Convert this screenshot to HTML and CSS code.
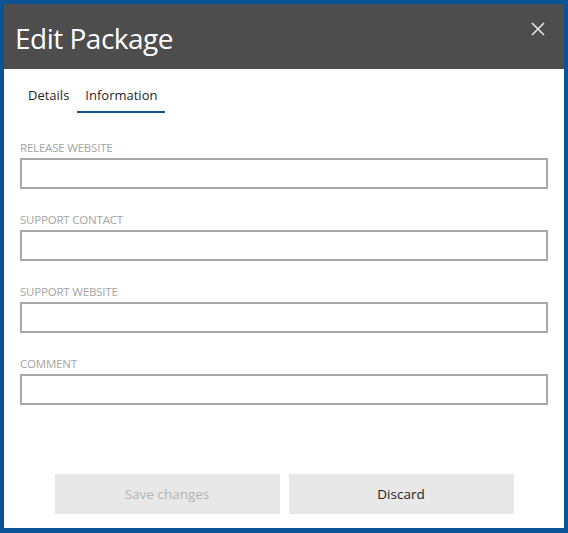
FILE: index.html
```html
<!DOCTYPE html>
<html>
<head>
<meta charset="utf-8">
<link rel="stylesheet" href="styles.css">
</head>
<body>
<div class="frame">
  <header class="header">
    <h1 class="title">Edit Package</h1>
    <button class="close" aria-label="Close">
      <svg width="14" height="14" viewBox="0 0 14 14"><path d="M1 1L13 13M13 1L1 13" stroke="#e6e6e6" stroke-width="1.6" fill="none"/></svg>
    </button>
  </header>
  <nav class="tabs">
    <div class="tab">Details</div>
    <div class="tab active">Information</div>
  </nav>
  <main class="form">
    <div class="field">
      <label class="label">RELEASE WEBSITE</label>
      <input class="input" type="text">
    </div>
    <div class="field">
      <label class="label">SUPPORT CONTACT</label>
      <input class="input" type="text">
    </div>
    <div class="field">
      <label class="label">SUPPORT WEBSITE</label>
      <input class="input" type="text">
    </div>
    <div class="field">
      <label class="label">COMMENT</label>
      <input class="input" type="text">
    </div>
  </main>
  <footer class="actions">
    <button class="btn disabled">Save changes</button>
    <button class="btn">Discard</button>
  </footer>
</div>
</body>
</html>
```
FILE: styles.css
```css
* { box-sizing: border-box; }
html, body { margin: 0; padding: 0; }
body {
  width: 568px;
  height: 533px;
  font-family: "Open Sans", "Noto Sans", sans-serif;
  background: #0b5394;
}
.frame {
  width: 568px;
  height: 533px;
  border-style: solid;
  border-color: #0b5394;
  border-width: 4px 4px 5px 4px;
  background: #fff;
  display: flex;
  flex-direction: column;
}
.header {
  height: 65px;
  background: #4d4d4d;
  display: flex;
  align-items: center;
  justify-content: space-between;
  padding: 0 19px 0 11px;
}
.title {
  margin: 0;
  font-weight: 400;
  font-size: 28px;
  color: #fff;
  letter-spacing: -0.5px;
  padding-top: 2px;
}
.close {
  background: none;
  border: 0;
  padding: 0;
  width: 14px;
  height: 14px;
  display: block;
  margin-top: -16px;
}
.close svg { display: block; }
.tabs {
  display: flex;
  padding-left: 16px;
}
.tab {
  padding: 16px 8px 6px;
  font-size: 13px;
  line-height: 20px;
  color: #1f1f1f;
  border-bottom: 2px solid transparent;
}
.tab.active { border-bottom-color: #0b5394; }
.form {
  padding: 27px 16px 0;
  display: flex;
  flex-direction: column;
  gap: 23px;
}
.field {
  display: flex;
  flex-direction: column;
  gap: 2px;
}
.label {
  font-size: 11.5px;
  line-height: 16px;
  color: #a3a3a3;
  letter-spacing: -0.2px;
}
.input {
  height: 31px;
  width: 100%;
  border: 2px solid #a6a6a6;
  margin: 0;
  background: #fff;
}
.actions {
  margin-top: auto;
  display: flex;
  justify-content: center;
  gap: 9px;
  padding-bottom: 14px;
}
.btn {
  width: 225px;
  height: 40px;
  border: 0;
  background: #e8e8e8;
  font-family: inherit;
  font-size: 13.5px;
  color: #222;
}
.btn.disabled { color: #b3b3b3; }
```
